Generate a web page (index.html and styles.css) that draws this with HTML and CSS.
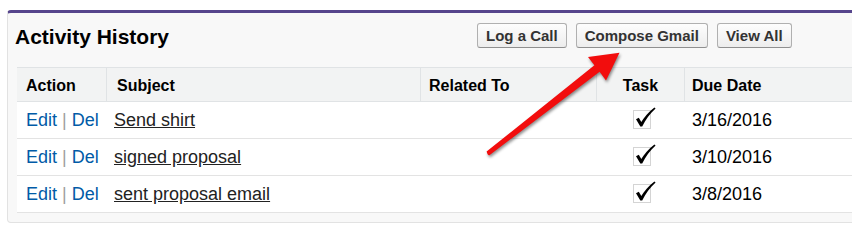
FILE: index.html
```html
<!DOCTYPE html>
<html lang="en">
<head>
<meta charset="utf-8">
<title>Activity History</title>
<link rel="stylesheet" href="styles.css">
</head>
<body>
<div class="panel">
  <div class="pb-header">
    <h2 class="title">Activity History</h2>
    <div class="buttons">
      <button class="btn">Log a Call</button>
      <button class="btn">Compose Gmail</button>
      <button class="btn">View All</button>
    </div>
  </div>
  <div class="list">
    <div class="row head">
      <div class="cell c-action">Action</div>
      <div class="cell c-subject">Subject</div>
      <div class="cell c-related">Related To</div>
      <div class="cell c-task">Task</div>
      <div class="cell c-date">Due Date</div>
    </div>
    <div class="row">
      <div class="cell c-action"><a class="lnk">Edit</a><span class="pipe">|</span><a class="lnk">Del</a></div>
      <div class="cell c-subject"><a class="subj">Send shirt</a></div>
      <div class="cell c-related"></div>
      <div class="cell c-task"><svg class="chk" width="24" height="24" viewBox="0 0 24 24"><rect x="0.5" y="4.5" width="17" height="18" fill="none" stroke="#a8a8a8" stroke-dasharray="1 1"/><path d="M3 13.2 L5.8 11.8 L8.3 16 C11 11.2 15.5 5.8 21.4 1.4 L22.6 2.6 C17 7.5 12.6 13.5 9.2 20.6 L7.3 20.6 Z" fill="#000"/></svg></div>
      <div class="cell c-date">3/16/2016</div>
    </div>
    <div class="row">
      <div class="cell c-action"><a class="lnk">Edit</a><span class="pipe">|</span><a class="lnk">Del</a></div>
      <div class="cell c-subject"><a class="subj">signed proposal</a></div>
      <div class="cell c-related"></div>
      <div class="cell c-task"><svg class="chk" width="24" height="24" viewBox="0 0 24 24"><rect x="0.5" y="4.5" width="17" height="18" fill="none" stroke="#a8a8a8" stroke-dasharray="1 1"/><path d="M3 13.2 L5.8 11.8 L8.3 16 C11 11.2 15.5 5.8 21.4 1.4 L22.6 2.6 C17 7.5 12.6 13.5 9.2 20.6 L7.3 20.6 Z" fill="#000"/></svg></div>
      <div class="cell c-date">3/10/2016</div>
    </div>
    <div class="row">
      <div class="cell c-action"><a class="lnk">Edit</a><span class="pipe">|</span><a class="lnk">Del</a></div>
      <div class="cell c-subject"><a class="subj">sent proposal email</a></div>
      <div class="cell c-related"></div>
      <div class="cell c-task"><svg class="chk" width="24" height="24" viewBox="0 0 24 24"><rect x="0.5" y="4.5" width="17" height="18" fill="none" stroke="#a8a8a8" stroke-dasharray="1 1"/><path d="M3 13.2 L5.8 11.8 L8.3 16 C11 11.2 15.5 5.8 21.4 1.4 L22.6 2.6 C17 7.5 12.6 13.5 9.2 20.6 L7.3 20.6 Z" fill="#000"/></svg></div>
      <div class="cell c-date">3/8/2016</div>
    </div>
  </div>
</div>
<svg class="arrow" width="852" height="235" viewBox="0 0 852 235">
  <path d="M486.6 151.6 L594.4 65.2 L588 57 L619.5 52.8 L606 80.5 L599.6 71.8 L489.4 155.2 Q487.5 155.5 486.6 151.6 Z" fill="#f20d0d"/>
</svg>
</body>
</html>
```

FILE: styles.css
```css
* { box-sizing: border-box; }
html, body { margin: 0; padding: 0; }
body {
  background: #fff;
  width: 852px;
  height: 235px;
  overflow: hidden;
  position: relative;
  font-family: "Liberation Sans", Arial, sans-serif;
  color: #000;
}
.panel {
  margin: 10px 0 0 7px;
  width: 900px;
  background: #f8f8f8;
  border: 1px solid #e2e2e2;
  border-top: 3px solid #56458c;
  border-radius: 4px;
  padding: 0 0 9px 0;
}
.pb-header {
  display: flex;
  align-items: flex-start;
  height: 54px;
  padding: 10px 0 0 7px;
}
.title {
  margin: 1px 0 0 0;
  width: 462px;
  font-size: 21px;
  line-height: 25px;
  font-weight: bold;
  color: #000;
}
.buttons {
  display: flex;
  gap: 9px;
}
.btn {
  height: 25px;
  padding: 0 8px;
  font-family: "Liberation Sans", Arial, sans-serif;
  font-size: 15px;
  font-weight: bold;
  color: #333;
  background: linear-gradient(#fdfdfd, #ededed);
  border: 1px solid #b0b0b0;
  border-bottom-color: #8f8f8f;
  border-radius: 3px;
  line-height: 22px;
}
.list {
  margin-left: 9px;
  width: 880px;
  background: #fff;
}
.row {
  display: grid;
  grid-template-columns: 90px 314px 176px 88px 1fr;
  height: 37px;
  border-bottom: 1px solid #e3e3e3;
  align-items: center;
  font-size: 18px;
}
.row.head {
  height: 35px;
  background: #f2f3f3;
  border-top: 1px solid #e0e3e5;
  border-bottom: 1px solid #e0e3e5;
  align-items: stretch;
  font-size: 16px;
  font-weight: bold;
}
.head .cell {
  border-right: 1px solid #e0e3e5;
  display: flex;
  align-items: center;
  padding-top: 2px;
}
.head .cell:last-child { border-right: 0; }
.cell { padding-left: 7px; white-space: nowrap; }
.c-action { padding-left: 9px; }
.head .c-subject { padding-left: 10px; }
.head .c-related { padding-left: 8px; }
.c-task { padding-left: 0; display: flex; justify-content: center; }
.head .c-task { justify-content: center; padding-left: 0; }
.lnk { color: #015ba7; text-decoration: none; }
.pipe { color: #a0a0a0; margin: 0 5px 0 5px; }
.subj { color: #222; text-decoration: underline; }
.chk { display: block; margin: -4px -4px 0 4px; }
.arrow {
  position: absolute;
  left: 0;
  top: 0;
  pointer-events: none;
  filter: drop-shadow(1px 2px 1.5px rgba(0,0,0,0.45));
}
```
